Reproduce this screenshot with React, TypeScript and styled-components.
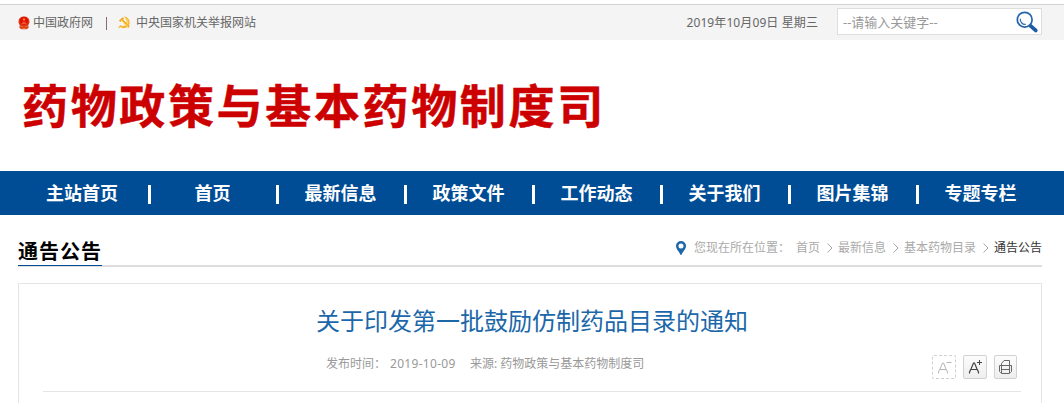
import React from "react";
import styled, { createGlobalStyle } from "styled-components";

// =============================================================================
// Constants
// =============================================================================

const BLUE = "#004d96";
const LINK_BLUE = "#1b67a9";
const RED = "#cc0000";
const BORDER = "#e4e4e4";

const NAV_ITEMS = [
  "主站首页",
  "首页",
  "最新信息",
  "政策文件",
  "工作动态",
  "关于我们",
  "图片集锦",
  "专题专栏",
];

const CRUMBS = ["首页", "最新信息", "基本药物目录"];

// =============================================================================
// Styled Components
// =============================================================================

const GlobalStyle = createGlobalStyle`
  * {
    box-sizing: border-box;
  }
  body {
    margin: 0;
    overflow: hidden;
    background: #fff;
    font-family: "Noto Sans", "Noto Sans CJK SC", sans-serif;
    font-size: 12px;
  }
`;

const Page = styled.div`
  height: 403px;
  overflow: hidden;
  padding-top: 4px;
`;

const TopBar = styled.div`
  display: flex;
  align-items: center;
  height: 36px;
  padding: 0 22px 0 18px;
  border-top: 1px solid #d2d2d2;
  background: #f4f4f4;
  color: #666;
  line-height: 18px;
  white-space: nowrap;
`;

const TopLink = styled.a<{ $gap: number }>`
  display: flex;
  align-items: center;
  gap: ${(props) => props.$gap}px;
`;

const TopDivider = styled.i`
  width: 1px;
  height: 13px;
  margin: 1px 11px 0 13px;
  background: #86687f;
`;

const Today = styled.span`
  margin-left: auto;
  margin-right: 19px;
  letter-spacing: 0.1px;
`;

const SearchBox = styled.div`
  display: flex;
  align-items: center;
  justify-content: space-between;
  width: 205px;
  height: 27px;
  margin-bottom: 2px;
  padding: 0 3px 0 5px;
  border: 1px solid #ddd;
  background: #fff;
  color: #999;
  font-size: 13px;
`;

const Banner = styled.header`
  display: flex;
  align-items: center;
  height: 131px;
  padding: 0 0 2px 22px;
`;

const SiteName = styled.h1`
  margin: 0;
  color: ${RED};
  font-size: 46px;
  font-weight: 700;
  line-height: 60px;
  letter-spacing: 2.65px;
  white-space: nowrap;
  -webkit-text-stroke: 0.5px ${RED};
`;

const Nav = styled.nav`
  display: flex;
  height: 44px;
  padding-left: 18px;
  background: ${BLUE};
`;

const NavItem = styled.a`
  display: flex;
  align-items: center;
  width: 128px;
  color: #fff;
  font-size: 18px;
  font-weight: 700;
  line-height: 44px;
  &:first-child {
    width: 133px;
  }
  &:not(:last-child)::after {
    content: "";
    width: 3px;
    height: 19px;
    margin-top: 2px;
    background: #fff;
  }
  &:last-child {
    padding-right: 3px;
  }
`;

const NavLabel = styled.span`
  flex: 1;
  padding-right: 2px;
  text-align: center;
`;

const SectionHead = styled.div`
  display: flex;
  justify-content: space-between;
  height: 52px;
  margin: 0 22px 0 18px;
  border-bottom: 2px solid #ddd;
`;

const SectionTitle = styled.h2`
  height: 51px;
  margin: 0;
  padding-top: 23px;
  border-bottom: 1px solid ${BLUE};
  color: #000;
  font-size: 20px;
  font-weight: 700;
  line-height: 28px;
  letter-spacing: 1px;
`;

const Breadcrumb = styled.div`
  display: flex;
  align-items: center;
  height: 18px;
  margin-top: 24px;
  color: #aaa;
  line-height: 18px;
  white-space: nowrap;
`;

const CrumbLead = styled.span`
  flex: none;
  width: 110px;
  padding-left: 8px;
`;

const CrumbArrow = styled.svg`
  width: 6px;
  height: 10px;
  margin: 0 5px 0 7px;
`;

const CrumbCurrent = styled.span`
  color: #333;
`;

const Article = styled.article`
  height: 140px;
  margin: 16px 22px 0 18px;
  padding: 0 20px 0 24px;
  border: 1px solid ${BORDER};
  border-bottom: 0;
`;

const ArticleTitle = styled.h3`
  margin: 0;
  padding: 19px 0 0 0;
  color: ${LINK_BLUE};
  font-size: 24px;
  font-weight: 400;
  line-height: 36px;
  text-align: center;
  white-space: nowrap;
`;

const Meta = styled.div`
  display: flex;
  align-items: flex-start;
  height: 53px;
  padding: 16px 4px 0 283px;
  border-bottom: 1px solid ${BORDER};
  color: #999;
  line-height: 18px;
  white-space: nowrap;
`;

const MetaLabel = styled.span<{ $width: number; $spacing?: number }>`
  width: ${(props) => props.$width}px;
  letter-spacing: ${(props) => props.$spacing || 0}px;
`;

const Tools = styled.div`
  display: flex;
  gap: 7px;
  margin-left: auto;
`;

const ToolButton = styled.button<{ $disabled?: boolean; $width?: number }>`
  display: flex;
  align-items: center;
  justify-content: center;
  width: ${(props) => props.$width || 24}px;
  height: 24px;
  padding: 0;
  border: 1px ${(props) => (props.$disabled ? "dashed #d0d0d0" : "solid #d2d2d2")};
  border-radius: 2px;
  background: ${(props) =>
    props.$disabled ? "#fff" : "linear-gradient(#fcfcfc, #eee)"};
  color: ${(props) => (props.$disabled ? "#b5b5b5" : "#444")};
`;

// =============================================================================
// Icons
// =============================================================================

const EmblemIcon = () => (
  <svg width="12" height="14" viewBox="0 0 12 14">
    <path d="M6 .5C9.200.5 11.500 2.500 11.500 5.500c0 1.800-.7 2.900-1.300 3.800l.5 2.500L8.500 13.200h-5l-2.200-1.400.5-2.500C1.200 8.400.5 7.300.5 5.500.5 2.500 2.800.5 6 .5z" fill="#dc3a18" />
    <circle cx="6" cy="5.200" r="4" fill="#e50b04" />
    <path d="M3.500 7.700h5M4.500 6.200h3M2.300 10.200h2.500M7.200 10.200h2.500M4 12.300h4" stroke="#f08a38" strokeWidth=".8" />
    <path d="M6 2l.5 1h1l-.8.7.3 1-1-.6-1 .6.3-1-.8-.7h1z" fill="#ffb735" />
  </svg>
);

const PartyIcon = () => (
  <svg width="13" height="13" viewBox="0 0 13 13">
    <path d="M5.600.5C9.300.3 12 3.600 11.600 7c-.3 3-2.800 5.200-5.800 5.200-1.500 0-2.500-.4-3.500-1.200L.9 12.300.2 11.400l1.300-1.300.5-1.200c3.100 2.200 6.800.9 6.700-2.500C8.600 3.800 7.800 1.700 5.600.5z" fill="#f7b436" />
    <path d="M.8 4.800 4.100 1.400 6.200 2 5.100 3.400l6.700 6.900-1.600 1.600L3.600 4.900 2.400 6.100z" fill="#f3a92e" />
    <path d="M7.500 2c2.300 1.800 3 4.500 1.500 6.700M3 4l7 7" fill="none" stroke="#ffe14c" strokeWidth=".9" />
  </svg>
);

const SearchIcon = () => (
  <svg width="22" height="22" viewBox="0 0 22 22" fill="none">
    <path d="m14 14.300 5.700 5.100" stroke="#1d5ca5" strokeWidth="3.800" strokeLinecap="round" />
    <circle cx="8.700" cy="8.700" r="7.400" stroke="#2465ac" strokeWidth="1.700" fill="#fff" />
    <path d="M4.300 7.800c-.3 3.400 2.300 6 5.400 5.500" stroke="#2c6bb0" strokeWidth="1.200" />
  </svg>
);

const PinIcon = () => (
  <svg width="10" height="14" viewBox="0 0 10 14">
    <path
      d="M5 0a5 5 0 0 1 5 5c0 3.200-3.400 5.800-4.600 9h-.8C3.400 10.800 0 8.200 0 5a5 5 0 0 1 5-5zm0 2.500a2.500 2.500 0 1 0 0 5 2.500 2.500 0 0 0 0-5z"
      fill={LINK_BLUE}
      fillRule="evenodd"
    />
  </svg>
);

const LetterIcon = ({ plus }: { plus?: boolean }) => (
  <svg width="22" height="22" viewBox="0 0 22 22" fill="none" stroke="currentColor">
    <path d="M5.500 17.500v-1.500l1.500-3 2.500-6h1l2.500 6 1.500 3v1.500M7 13.500h6" strokeWidth={plus ? 1.2 : 1} />
    <path d={plus ? "M13 6.500h5M15.500 4v5" : "M13.500 6.500h5"} />
  </svg>
);

const PrintIcon = () => (
  <svg width="21" height="22" viewBox="0 0 21 22" fill="none" stroke="#666">
    <path d="M6.500 9.500v-2l2.500-3h5.500v5M4.500 9.500h12v6l-1 1h-1.500M4.500 9.500v6l1 1H7M6.500 9.500v8h8v-8M6.500 13.500h8" />
  </svg>
);

// =============================================================================
// Main Component
// =============================================================================

const App = () => (
  <Page>
    <GlobalStyle />
    <TopBar>
      <TopLink $gap={3}>
        <EmblemIcon />
        中国政府网
      </TopLink>
      <TopDivider />
      <TopLink $gap={5}>
        <PartyIcon />
        中央国家机关举报网站
      </TopLink>
      <Today>2019年10月09日 星期三</Today>
      <SearchBox>
        --请输入关键字--
        <SearchIcon />
      </SearchBox>
    </TopBar>

    <Banner>
      <SiteName>药物政策与基本药物制度司</SiteName>
    </Banner>

    <Nav>
      {NAV_ITEMS.map((item) => (
        <NavItem key={item}>
          <NavLabel>{item}</NavLabel>
        </NavItem>
      ))}
    </Nav>

    <SectionHead>
      <SectionTitle>通告公告</SectionTitle>
      <Breadcrumb>
        <PinIcon />
        <CrumbLead>您现在所在位置：</CrumbLead>
        {CRUMBS.map((crumb) => (
          <React.Fragment key={crumb}>
            <span>{crumb}</span>
            <CrumbArrow viewBox="0 0 6 10" fill="none" stroke="#aaa">
              <path d="M.5.5 5 5 .5 9.500" />
            </CrumbArrow>
          </React.Fragment>
        ))}
        <CrumbCurrent>通告公告</CrumbCurrent>
      </Breadcrumb>
    </SectionHead>

    <Article>
      <ArticleTitle>关于印发第一批鼓励仿制药品目录的通知</ArticleTitle>
      <Meta>
        <MetaLabel $width={64}>发布时间：</MetaLabel>
        <MetaLabel $width={80} $spacing={0.3}>
          2019-10-09
        </MetaLabel>
        <span>来源: 药物政策与基本药物制度司</span>
        <Tools>
          <ToolButton $disabled>
            <LetterIcon />
          </ToolButton>
          <ToolButton>
            <LetterIcon plus />
          </ToolButton>
          <ToolButton $width={23}>
            <PrintIcon />
          </ToolButton>
        </Tools>
      </Meta>
    </Article>
  </Page>
);

export default App;
